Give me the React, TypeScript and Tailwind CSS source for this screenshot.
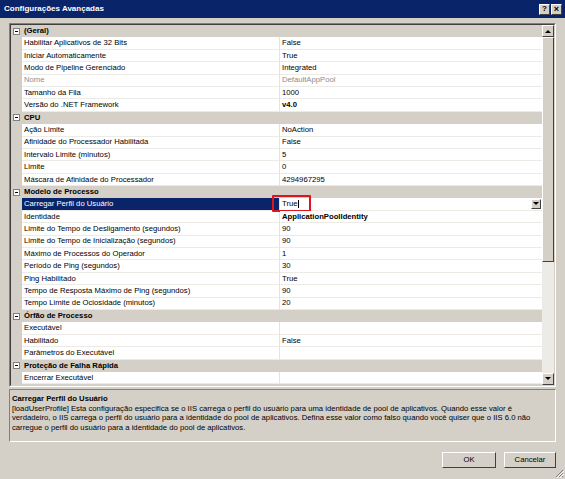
import React from "react";

type Row = {
  cat?: string;
  n?: string;
  v?: string;
  dim?: boolean;
  bold?: boolean;
  selected?: boolean;
};

const rows: Row[] = [
  { cat: "(Geral)" },
  { n: "Habilitar Aplicativos de 32 Bits", v: "False" },
  { n: "Iniciar Automaticamente", v: "True" },
  { n: "Modo de Pipeline Gerenciado", v: "Integrated" },
  { n: "Nome", v: "DefaultAppPool", dim: true },
  { n: "Tamanho da Fila", v: "1000" },
  { n: "Versão do .NET Framework", v: "v4.0", bold: true },
  { cat: "CPU" },
  { n: "Ação Limite", v: "NoAction" },
  { n: "Afinidade do Processador Habilitada", v: "False" },
  { n: "Intervalo Limite (minutos)", v: "5" },
  { n: "Limite", v: "0" },
  { n: "Máscara de Afinidade do Processador", v: "4294967295" },
  { cat: "Modelo de Processo" },
  { n: "Carregar Perfil do Usuário", v: "True", selected: true },
  { n: "Identidade", v: "ApplicationPoolIdentity", bold: true },
  { n: "Limite do Tempo de Desligamento (segundos)", v: "90" },
  { n: "Limite do Tempo de Inicialização (segundos)", v: "90" },
  { n: "Máximo de Processos do Operador", v: "1" },
  { n: "Período de Ping (segundos)", v: "30" },
  { n: "Ping Habilitado", v: "True" },
  { n: "Tempo de Resposta Máximo de Ping (segundos)", v: "90" },
  { n: "Tempo Limite de Ociosidade (minutos)", v: "20" },
  { cat: "Órfão de Processo" },
  { n: "Executável", v: "" },
  { n: "Habilitado", v: "False" },
  { n: "Parâmetros do Executável", v: "" },
  { cat: "Proteção de Falha Rápida" },
  { n: "Encerrar Executável", v: "" },
];

// classic raised 3D button edge
const raised =
  "border border-t-white border-l-white border-r-[#404040] border-b-[#404040] bg-[#d4d0c8]";

function Arrow({ up, small }: { up?: boolean; small?: boolean }) {
  return (
    <div
      className={`${small ? "w-[10px] h-[10px]" : "w-[12px] h-[12px]"} flex items-center justify-center ${raised}`}
    >
      <svg width="6" height="4" viewBox="0 0 6 4">
        {up ? <path d="M0 4 L3 1 L6 4 Z" fill="#000" /> : <path d="M0 0 L3 3 L6 0 Z" fill="#000" />}
      </svg>
    </div>
  );
}

function Minus() {
  return (
    <div className="w-[7px] h-[7px] border border-[#808080] bg-white flex items-center justify-center">
      <div className="w-[3px] h-px bg-black" />
    </div>
  );
}

function GridRow({ r }: { r: Row }) {
  if (r.cat) {
    return (
      <div className="h-[12.4px] flex items-center bg-[#d4d0c8]">
        <div className="w-[11px] flex justify-center items-center">
          <Minus />
        </div>
        <span className="pl-[2px] font-bold text-black">{r.cat}</span>
      </div>
    );
  }
  return (
    <div className="h-[12.4px] flex bg-[#d4d0c8]">
      <div className="w-[11px] shrink-0" />
      <div
        className={`w-[257px] shrink-0 flex items-center pl-[2px] border-b border-[#ecebe6] ${
          r.selected ? "bg-[#0a246a] text-white" : "bg-white"
        } ${r.dim ? "text-[#8c8c8c]" : ""}`}
      >
        {r.n}
      </div>
      <div className="w-px bg-[#e4e3de]" />
      <div
        className={`flex-1 relative flex items-center pl-[2px] bg-white border-b border-[#ecebe6] ${
          r.bold ? "font-bold" : ""
        } ${r.dim ? "text-[#8c8c8c]" : ""}`}
      >
        {r.selected ? (
          <>
            <span>{r.v}</span>
            <span className="w-px h-[8px] bg-black" />
            <div className="absolute left-[-8px] top-[-3px] w-[39px] h-[17px] border-2 border-[#e0141c] rounded-[1px]" />
            <div className="absolute right-[1px] top-[1px]">
              <Arrow small />
            </div>
          </>
        ) : (
          r.v
        )}
      </div>
    </div>
  );
}

export default function App() {
  return (
    <div
      className="w-[565px] h-[479px] bg-[#d4d0c8] flex flex-col text-[7.7px] leading-none text-black overflow-hidden relative"
      style={{ fontFamily: '"Liberation Sans", Arial, sans-serif' }}
    >
      {/* Title bar */}
      <div className="h-[18px] bg-[#0a246a] flex items-center justify-between pl-[4px] pr-[3px]">
        <span className="text-white font-bold text-[8px]">Configurações Avançadas</span>
        <div className="flex gap-[1px]">
          <div className={`w-[11px] h-[11px] flex items-center justify-center font-bold text-[8px] ${raised}`}>?</div>
          <div className={`w-[11px] h-[11px] flex items-center justify-center font-bold text-[9px] ${raised}`}>×</div>
        </div>
      </div>

      {/* Property grid */}
      <div className="mt-[5px] mx-[9px] h-[364px] border border-t-[#808080] border-l-[#808080] border-r-white border-b-white">
        <div className="h-full flex border border-t-[#404040] border-l-[#404040] border-r-[#d4d0c8] border-b-[#d4d0c8] bg-[#d4d0c8]">
          <div className="flex-1 flex flex-col">
            {rows.map((r, i) => (
              <GridRow key={i} r={r} />
            ))}
          </div>
          {/* Scrollbar */}
          <div className="w-[12px] flex flex-col bg-[#ecebe6]">
            <Arrow up />
            <div className={`h-[225px] ${raised}`} />
            <div className="flex-1" />
            <Arrow />
          </div>
        </div>
      </div>

      {/* Description */}
      <div className="mt-[2px] mx-[9px] h-[53px] border border-t-[#808080] border-l-[#808080] border-r-white border-b-white px-[2px] pt-[4px] leading-[9.7px] whitespace-nowrap">
        <div className="font-bold">Carregar Perfil do Usuário</div>
        <div>
          [loadUserProfile] Esta configuração especifica se o IIS carrega o perfil do usuário para uma identidade de pool
          de aplicativos. Quando esse valor é
          <br />
          verdadeiro, o IIS carrega o perfil do usuário para a identidade do pool de aplicativos. Defina esse valor como
          falso quando você quiser que o IIS 6.0 não
          <br />
          carregue o perfil do usuário para a identidade do pool de aplicativos.
        </div>
      </div>

      {/* Buttons */}
      <div className="mt-[10px] flex justify-end gap-[8px] pr-[9px]">
        <button className={`w-[54px] h-[16px] ${raised} text-[7.7px]`}>OK</button>
        <button className={`w-[52px] h-[16px] ${raised} text-[7.7px]`}>Cancelar</button>
      </div>

      {/* Size grip */}
      <svg className="absolute right-[1px] bottom-[1px]" width="10" height="10" viewBox="0 0 10 10">
        <path d="M9 2 L2 9 M9 5 L5 9 M9 8 L8 9" stroke="#808080" strokeWidth="1" />
        <path d="M10 3 L3 10 M10 6 L6 10" stroke="#fff" strokeWidth="1" />
      </svg>
    </div>
  );
}
